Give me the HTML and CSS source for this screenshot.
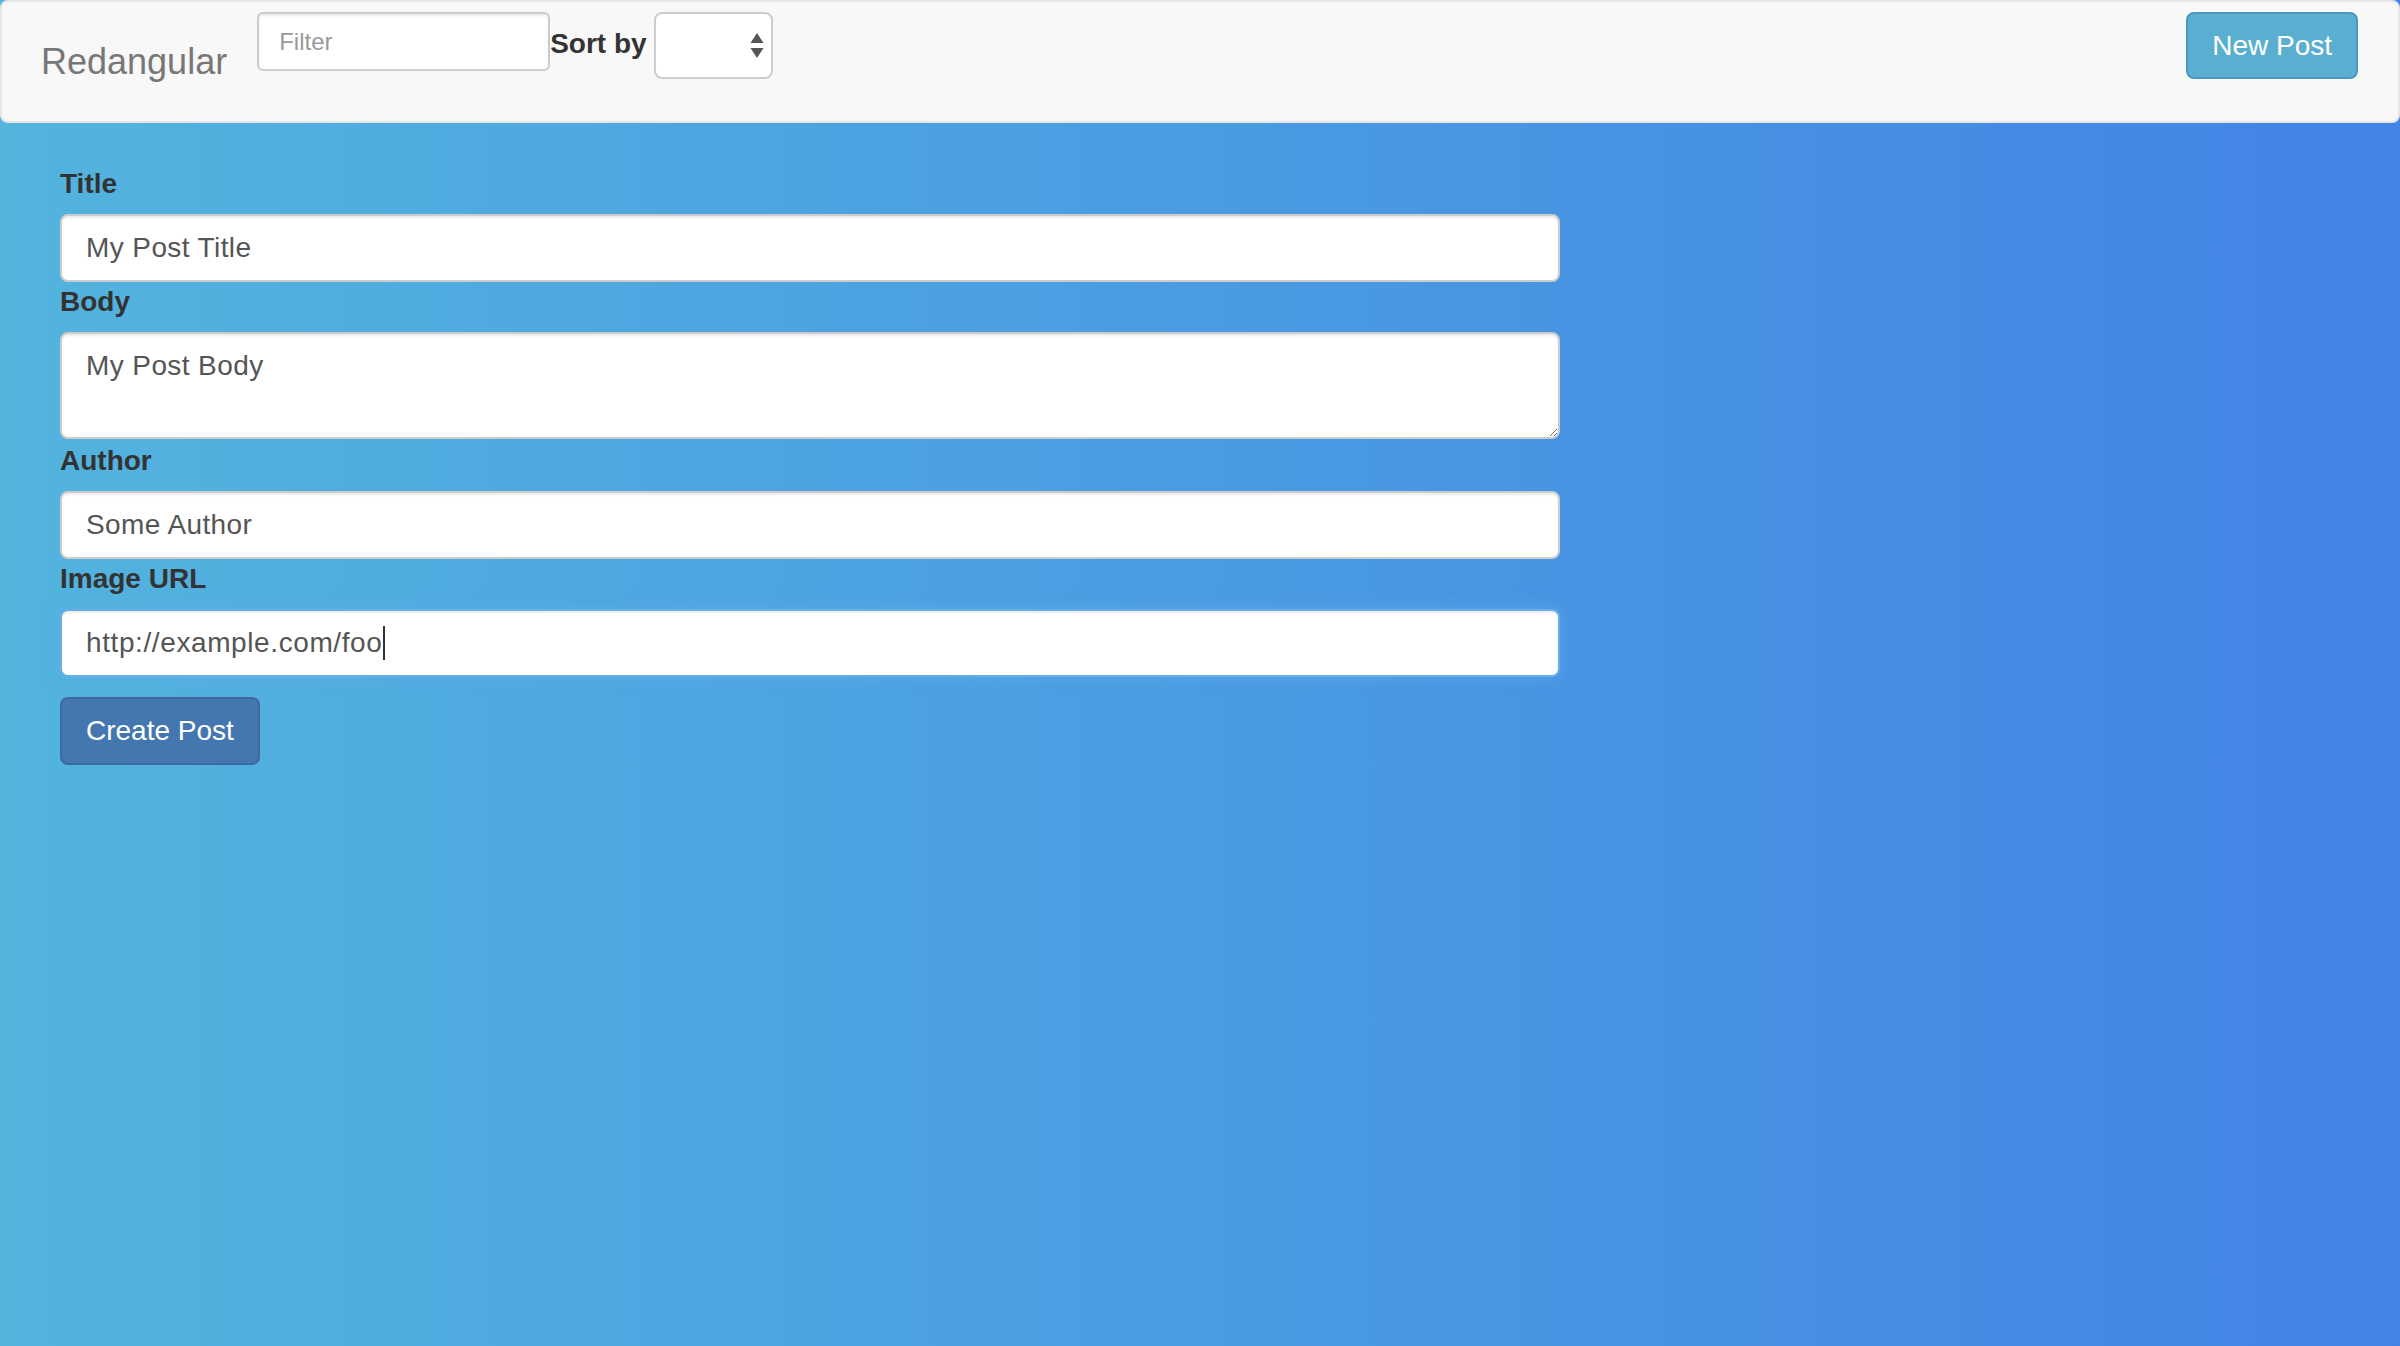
FILE: index.html
```html
<!DOCTYPE html>
<html lang="en">
<head>
<meta charset="utf-8">
<title>Redangular</title>
<link rel="stylesheet" href="styles.css">
</head>
<body>
<nav class="navbar">
  <a class="brand" href="#">Redangular</a>
  <form class="nav-form">
    <input class="filter" type="text" placeholder="Filter">
    <label class="sort-label">Sort by</label>
    <div class="select">
      <svg class="select-arrows" viewBox="0 0 14 26" width="14" height="26" aria-hidden="true">
        <polygon points="7,0 13.5,10 0.5,10"></polygon>
        <polygon points="0.5,15 13.5,15 7,25"></polygon>
      </svg>
    </div>
  </form>
  <button class="btn btn-info" type="button">New Post</button>
</nav>
<main class="main">
  <form class="post-form">
    <label class="field-label">Title</label>
    <input class="form-control" type="text" value="My Post Title">
    <label class="field-label">Body</label>
    <textarea class="form-control body-area">My Post Body</textarea>
    <label class="field-label">Author</label>
    <input class="form-control" type="text" value="Some Author">
    <label class="field-label">Image URL</label>
    <div class="form-control focused"><span>http://example.com/foo</span><span class="caret"></span></div>
    <button class="btn btn-primary" type="button">Create Post</button>
  </form>
</main>
</body>
</html>
```
FILE: styles.css
```css
html {
  background: linear-gradient(to right, #53b4de, #4283e6);
  min-height: 100%;
}

body {
  margin: 0;
  min-height: 100vh;
  background: linear-gradient(to right, #53b4de, #4283e6);
  font-family: "Liberation Sans", Arial, Helvetica, sans-serif;
  font-size: 28px;
  line-height: 40px;
  color: #333;
}

.navbar {
  display: flex;
  align-items: flex-start;
  box-sizing: border-box;
  height: 123px;
  padding: 10px 38px 0 38px;
  background: #f8f8f8;
  border: 2px solid #e7e7e7;
  border-radius: 8px;
}

.brand {
  margin-top: 30px;
  margin-left: 1px;
  font-size: 36px;
  line-height: 40px;
  color: #777;
  text-decoration: none;
}

.nav-form {
  display: flex;
  align-items: flex-start;
  margin: 0 0 0 30px;
}

.filter {
  width: 293px;
  height: 59px;
  box-sizing: border-box;
  margin: 0;
  padding: 0 20px;
  border: 2px solid #ccc;
  border-radius: 6px;
  background: #fff;
  box-shadow: inset 0 2px 2px rgba(0, 0, 0, 0.075);
  font-family: "Liberation Sans", Arial, Helvetica, sans-serif;
  font-size: 24px;
  color: #555;
  outline: none;
}

.filter::placeholder {
  color: #999;
}

.sort-label {
  margin-top: 12px;
  font-weight: bold;
  line-height: 40px;
  color: #333;
}

.select {
  display: flex;
  align-items: center;
  justify-content: flex-end;
  box-sizing: border-box;
  width: 119px;
  height: 67px;
  margin-left: 7px;
  padding-right: 7px;
  border: 2px solid #ccc;
  border-radius: 8px;
  background: #fff;
}

.select-arrows {
  display: block;
  fill: #555;
}

.btn {
  box-sizing: border-box;
  height: 68px;
  margin: 0;
  padding: 0 24px;
  border-radius: 8px;
  font-family: "Liberation Sans", Arial, Helvetica, sans-serif;
  font-size: 28px;
  line-height: 40px;
  color: #fff;
  cursor: pointer;
}

.btn-info {
  margin-left: auto;
  margin-right: 2px;
  height: 67px;
  background: #5aafd1;
  border: 2px solid #4799bd;
}

.main {
  padding: 41px 60px 0 60px;
}

.post-form {
  width: 1500px;
}

.field-label {
  display: block;
  margin-bottom: 10px;
  font-weight: bold;
  color: #333;
}

.form-control {
  display: block;
  width: 100%;
  height: 68px;
  box-sizing: border-box;
  margin: 0;
  padding: 12px 24px;
  border: 2px solid #ccc;
  border-radius: 8px;
  background: #fff;
  box-shadow: inset 0 2px 2px rgba(0, 0, 0, 0.075);
  font-family: "Liberation Sans", Arial, Helvetica, sans-serif;
  font-size: 28px;
  line-height: 40px;
  letter-spacing: 0.4px;
  color: #555;
  outline: none;
}

.body-area {
  height: 107px;
  margin-bottom: 2px;
  resize: vertical;
}

.focused {
  border-color: #66afe9;
  box-shadow: inset 0 2px 2px rgba(0, 0, 0, 0.075), 0 0 16px rgba(102, 175, 233, 0.6);
  white-space: nowrap;
  letter-spacing: 0.6px;
}

.caret {
  display: inline-block;
  width: 2px;
  height: 34px;
  margin-left: 1px;
  background: #333;
  vertical-align: -8px;
}

.btn-primary {
  display: block;
  margin-top: 20px;
  background: #4477b0;
  border: 2px solid #3c69a0;
}
```
